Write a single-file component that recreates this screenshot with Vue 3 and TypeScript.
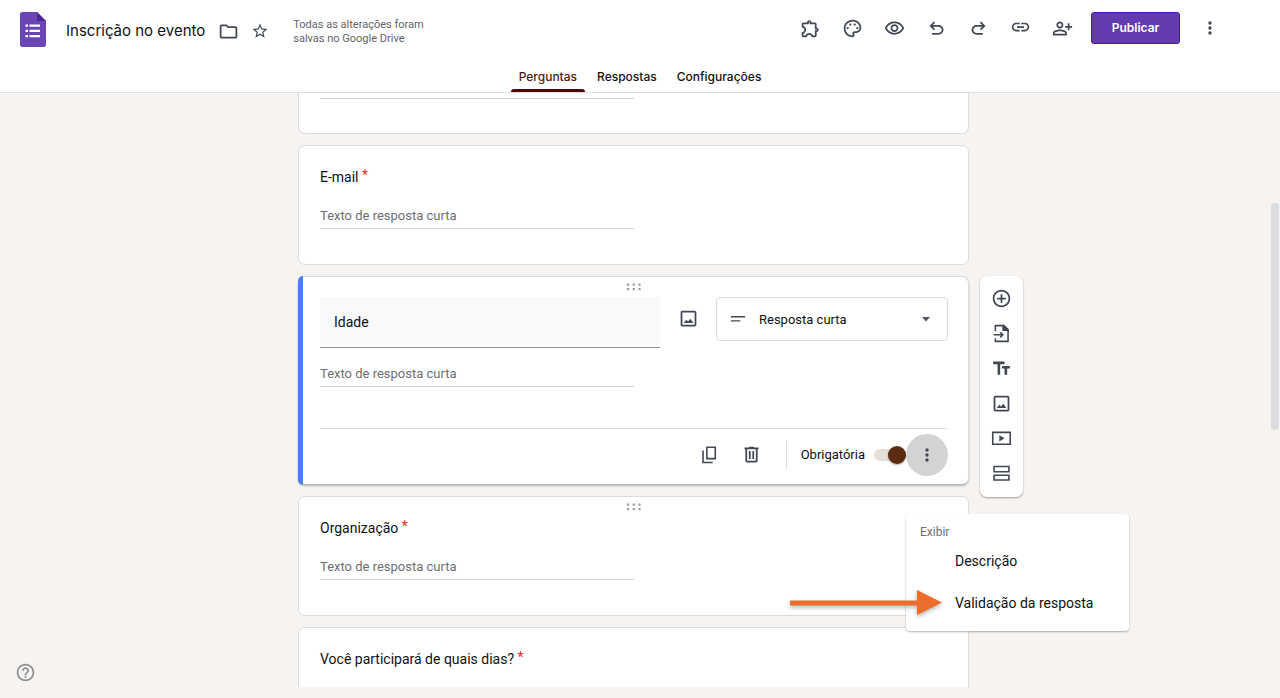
<script setup lang="ts">
import { h, ref } from 'vue'

interface Glyph {
  fill?: string
  line?: string
}

const glyphs: Record<string, Glyph> = {
  folder: {
    fill: 'M9.17 6l2 2H20v10H4V6h5.17M10 4H4c-1.1 0-1.99.9-1.99 2L2 18c0 1.1.9 2 2 2h16c1.1 0 2-.9 2-2V8c0-1.1-.9-2-2-2h-8l-2-2z',
  },
  star: {
    fill: 'M22 9.24l-7.19-.62L12 2 9.19 8.63 2 9.24l5.46 4.73L5.82 21 12 17.27 18.18 21l-1.63-7.03L22 9.24zM12 15.4l-3.76 2.27 1-4.28-3.32-2.88 4.38-.38L12 6.1l1.71 4.04 4.38.38-3.32 2.88 1 4.28L12 15.4z',
  },
  extension: {
    fill: 'M10.5 4.5c.28 0 .5.22.5.5v2h6v6h2c.28 0 .5.22.5.5s-.22.5-.5.5h-2v6h-2.12c-.68-1.75-2.39-3-4.38-3s-3.7 1.25-4.38 3H4v-2.12c1.75-.68 3-2.39 3-4.38 0-1.99-1.24-3.7-2.99-4.38L4 7h6V5c0-.28.22-.5.5-.5m0-2C9.12 2.5 8 3.62 8 5H4c-1.1 0-1.99.9-1.99 2v3.8h.29c1.49 0 2.7 1.21 2.7 2.7s-1.21 2.7-2.7 2.7H2V20c0 1.1.9 2 2 2h3.8v-.3c0-1.49 1.21-2.7 2.7-2.7s2.7 1.21 2.7 2.7v.3H17c1.1 0 2-.9 2-2v-4c1.38 0 2.5-1.12 2.5-2.5S20.38 11 19 11V7c0-1.1-.9-2-2-2h-4c0-1.38-1.12-2.5-2.5-2.5z',
  },
  palette: {
    fill: 'M12 22C6.49 22 2 17.51 2 12S6.49 2 12 2s10 4.04 10 9c0 3.31-2.69 6-6 6h-1.77c-.28 0-.5.22-.5.5 0 .12.05.23.13.33.41.47.64 1.06.64 1.67 0 1.38-1.12 2.5-2.5 2.5zm0-18c-4.41 0-8 3.59-8 8s3.59 8 8 8c.28 0 .5-.22.5-.5 0-.16-.08-.28-.14-.35-.41-.46-.63-1.05-.63-1.65 0-1.38 1.12-2.5 2.5-2.5H16c2.21 0 4-1.79 4-4 0-3.86-3.59-7-8-7zM5.2 11.5a1.3 1.3 0 1 0 2.6 0 1.3 1.3 0 1 0-2.6 0zM8.2 7.5a1.3 1.3 0 1 0 2.6 0 1.3 1.3 0 1 0-2.6 0zM13.2 7.5a1.3 1.3 0 1 0 2.6 0 1.3 1.3 0 1 0-2.6 0zM16.2 11.5a1.3 1.3 0 1 0 2.6 0 1.3 1.3 0 1 0-2.6 0z',
  },
  eye: {
    fill: 'M12 6c3.79 0 7.17 2.13 8.82 5.5C19.17 14.87 15.79 17 12 17s-7.17-2.13-8.82-5.5C4.83 8.13 8.21 6 12 6m0-2C7 4 2.73 7.11 1 11.5 2.73 15.89 7 19 12 19s9.27-3.11 11-7.5C21.27 7.11 17 4 12 4zm0 5c1.38 0 2.5 1.12 2.5 2.5S13.38 14 12 14s-2.5-1.12-2.5-2.5S10.62 9 12 9m0-2c-2.48 0-4.5 2.02-4.5 4.5S9.52 16 12 16s4.5-2.02 4.5-4.5S14.48 7 12 7z',
  },
  undo: {
    fill: 'M7 19v-2h7.1q1.575 0 2.738-1T18 13.5t-1.162-2.5T14.1 10H7.8l2.6 2.6L9 14 4 9l5-5 1.4 1.4L7.8 8h6.3q2.425 0 4.163 1.575T20 13.5t-1.737 3.925T14.1 19z',
  },
  redo: {
    fill: 'M17 19v-2H9.9q-1.575 0-2.738-1T6 13.5t1.162-2.5T9.9 10h6.3l-2.6 2.6L15 14l5-5-5-5-1.4 1.4L16.2 8H9.9Q7.475 8 5.737 9.575T4 13.5t1.737 3.925T9.9 19z',
  },
  link: {
    fill: 'M3.9 10.3c0-1.71 1.39-3.1 3.1-3.1h4V5.3H7c-2.76 0-5 2.24-5 5s2.24 5 5 5h4v-1.9H7c-1.71 0-3.1-1.39-3.1-3.1zM8 11.3h8v-2H8v2zm9-6h-4v1.9h4c1.71 0 3.1 1.39 3.1 3.1s-1.39 3.1-3.1 3.1h-4v1.9h4c2.76 0 5-2.24 5-5s-2.24-5-5-5z',
  },
  share: {
    fill: 'M20 9V6h-2v3h-3v2h3v3h2v-3h3V9h-3zM9 12c2.21 0 4-1.79 4-4s-1.79-4-4-4-4 1.79-4 4 1.79 4 4 4zm0-6c1.1 0 2 .9 2 2s-.9 2-2 2-2-.9-2-2 .9-2 2-2zm6.39 8.56C13.71 13.7 11.53 13 9 13s-4.71.7-6.39 1.56C1.61 15.07 1 16.1 1 17.22V20h16v-2.78c0-1.12-.61-2.15-1.61-2.66zM15 18H3v-.78c0-.38.2-.72.52-.88C4.71 15.73 6.63 15 9 15s4.29.73 5.48 1.34c.32.16.52.5.52.88V18z',
  },
  more: {
    fill: 'M10 6a2 2 0 1 0 4 0 2 2 0 1 0-4 0zM10 12a2 2 0 1 0 4 0 2 2 0 1 0-4 0zM10 18a2 2 0 1 0 4 0 2 2 0 1 0-4 0z',
  },
  image: {
    fill: 'M19 3H5c-1.1 0-2 .9-2 2v14c0 1.1.9 2 2 2h14c1.1 0 2-.9 2-2V5c0-1.1-.9-2-2-2zm0 16H5V5h14v14zM6.6 17l2.9-3.7 2 2.2 2.6-3.3 3.5 4.8z',
  },
  shortText: { line: 'M2.500 9h19M2.500 14.500h12.500' },
  copy: { line: 'M9 3.7h9.6v13H9zM4.6 7.5v13.6h11' },
  trash: {
    fill: 'M15 4V3H9v1H4v2h1v13c0 1.1.9 2 2 2h10c1.1 0 2-.9 2-2V6h1V4h-5zm2 15H7V6h10v13zM9 8h2v9H9zm4 0h2v9h-2z',
  },
  add: {
    fill: 'M13 7h-2v4H7v2h4v4h2v-4h4v-2h-4V7zm-1-5C6.48 2 2 6.48 2 12s4.48 10 10 10 10-4.48 10-10S17.52 2 12 2zm0 18c-4.41 0-8-3.59-8-8s3.59-8 8-8 8 3.59 8 8-3.59 8-8 8z',
  },
  importDoc: {
    fill: 'M13 2h2l5.500 5.500V9H13z',
    line: 'M5 9.500V3h9.500L19.500 8v13H5v-3.500M3 13.500h10.500M10.500 10.500l3 3-3 3',
  },
  title: { fill: 'M2.500 4v3h5v12h3V7h5V4h-13zm19 5h-9v3h3v7h3v-7h3V9z' },
  video: { line: 'M2 5h20v13.500H2z', fill: 'M9.500 8.300v7l6-3.500z' },
  section: { line: 'M3.500 4h17v6h-17zM3.500 14h17v5.500h-17z' },
  help: {
    fill: 'M11 18h2v-2h-2v2zm1-16C6.48 2 2 6.48 2 12s4.480 10 10 10 10-4.480 10-10S17.520 2 12 2zm0 18c-4.410 0-8-3.590-8-8s3.590-8 8-8 8 3.590 8 8-3.590 8-8 8zm0-14c-2.210 0-4 1.790-4 4h2c0-1.100.9-2 2-2s2 .9 2 2c0 2-3 1.750-3 5h2c0-2.250 3-2.500 3-5 0-2.210-1.790-4-4-4z',
  },
}

const Icon = (props: { name: string }) => {
  const glyph = glyphs[props.name]
  return h('svg', { class: 'icon', viewBox: '0 0 24 24', 'aria-hidden': 'true' }, [
    glyph.fill ? h('path', { d: glyph.fill, fill: 'currentColor' }) : null,
    glyph.line
      ? h('path', { d: glyph.line, fill: 'none', stroke: 'currentColor', 'stroke-width': 1.8 })
      : null,
  ])
}
Icon.props = ['name']

const actions = [
  { icon: 'extension', label: 'Complementos' },
  { icon: 'palette', label: 'Personalizar tema' },
  { icon: 'eye', label: 'Visualizar' },
  { icon: 'undo', label: 'Desfazer' },
  { icon: 'redo', label: 'Refazer' },
  { icon: 'link', label: 'Copiar link' },
  { icon: 'share', label: 'Adicionar colaboradores' },
]

const tabs = ['Perguntas', 'Respostas', 'Configurações']
const activeTab = ref('Perguntas')

const tools = [
  { icon: 'add', label: 'Adicionar pergunta' },
  { icon: 'importDoc', label: 'Importar perguntas' },
  { icon: 'title', label: 'Adicionar título e descrição' },
  { icon: 'image', label: 'Adicionar imagem' },
  { icon: 'video', label: 'Adicionar vídeo' },
  { icon: 'section', label: 'Adicionar seção' },
]

const question = ref('Idade')
const required = ref(true)
const answerHint = 'Texto de resposta curta'
</script>

<template>
  <div class="app">
    <header class="header">
      <div class="bar">
        <svg class="logo" viewBox="0 0 26 35" aria-hidden="true">
          <path d="M2.500 0H17l9 9v23.500a2.500 2.500 0 0 1-2.500 2.500h-21A2.500 2.500 0 0 1 0 32.500v-30A2.500 2.500 0 0 1 2.500 0z" fill="#6c45b5" />
          <path d="M17 0l9 9h-9z" fill="#4a2692" />
          <path d="M9.500 12.500H20v2.300H9.500zM9.500 17.800H20v2.300H9.500zM9.500 23H20v2.300H9.500zM5.500 12.500H8v2.300H5.500zM5.500 17.800H8v2.300H5.500zM5.500 23H8v2.300H5.500z" fill="#fff" />
        </svg>
        <h1 class="title">Inscrição no evento</h1>
        <button class="plain" type="button" aria-label="Mover para pasta"><Icon name="folder" /></button>
        <button class="plain star" type="button" aria-label="Marcar com estrela"><Icon name="star" /></button>
        <p class="saved">Todas as alterações foram salvas no Google Drive</p>
        <div class="actions">
          <button v-for="a in actions" :key="a.icon" class="action" type="button" :aria-label="a.label">
            <Icon :name="a.icon" />
          </button>
          <button class="publish" type="button">Publicar</button>
          <button class="action overflow" type="button" aria-label="Mais opções"><Icon name="more" /></button>
        </div>
      </div>
      <nav class="tabs">
        <button
          v-for="t in tabs"
          :key="t"
          class="tab"
          :class="{ current: t === activeTab }"
          type="button"
          @click="activeTab = t"
        >
          {{ t }}
        </button>
      </nav>
    </header>

    <main class="canvas">
      <section class="card continued">
        <div class="rule"></div>
      </section>

      <section class="card">
        <h2 class="question">E-mail <span class="mark">*</span></h2>
        <input class="answer" type="text" disabled :placeholder="answerHint" aria-label="Resposta de E-mail" />
      </section>

      <section class="card active">
        <svg class="grip" viewBox="0 0 14 8" aria-hidden="true">
          <path d="M0 .5h2.200v2.200H0zM5.700.5h2.200v2.200H5.700zM11.400.5h2.200v2.200h-2.200zM0 5h2.200v2.200H0zM5.700 5h2.200v2.200H5.700zM11.400 5h2.200v2.200h-2.200z" fill="#9b9da1" />
        </svg>
        <div class="editor">
          <input v-model="question" class="prompt" type="text" aria-label="Pergunta" />
          <button class="plain picture" type="button" aria-label="Adicionar imagem"><Icon name="image" /></button>
          <div class="kind">
            <Icon name="shortText" />
            <select class="select" aria-label="Tipo de pergunta">
              <option>Resposta curta</option>
            </select>
            <svg class="caret" viewBox="0 0 10 5" aria-hidden="true"><path d="M1 0h8L5 4.500z" fill="#50555e" /></svg>
          </div>
        </div>
        <input class="answer" type="text" disabled :placeholder="answerHint" aria-label="Resposta de Idade" />
        <div class="footer">
          <button class="plain tool" type="button" aria-label="Duplicar"><Icon name="copy" /></button>
          <button class="plain tool" type="button" aria-label="Excluir"><Icon name="trash" /></button>
          <label class="required">
            <span>Obrigatória</span>
            <input v-model="required" class="switch" type="checkbox" role="switch" />
          </label>
          <div class="anchor">
            <button class="more" type="button" aria-label="Mais opções da pergunta"><Icon name="more" /></button>
            <div class="menu">
              <p class="menu-label">Exibir</p>
              <button class="menu-item" type="button">Descrição</button>
              <button class="menu-item" type="button">Validação da resposta</button>
              <svg class="pointer" viewBox="0 0 154 26" aria-hidden="true">
                <path d="M0 10.500h127V0l25 12.500L127 25V15.500H0z" fill="#ec6c2b" />
              </svg>
            </div>
          </div>
        </div>
      </section>

      <aside class="toolbar">
        <button v-for="t in tools" :key="t.icon" class="plain" type="button" :aria-label="t.label">
          <Icon :name="t.icon" />
        </button>
      </aside>

      <section class="card">
        <svg class="grip" viewBox="0 0 14 8" aria-hidden="true">
          <path d="M0 .5h2.200v2.200H0zM5.700.5h2.200v2.200H5.700zM11.400.5h2.200v2.200h-2.200zM0 5h2.200v2.200H0zM5.700 5h2.200v2.200H5.700zM11.400 5h2.200v2.200h-2.200z" fill="#9b9da1" />
        </svg>
        <h2 class="question">Organização <span class="mark">*</span></h2>
        <input class="answer" type="text" disabled :placeholder="answerHint" aria-label="Resposta de Organização" />
      </section>

      <section class="card last">
        <h2 class="question">Você participará de quais dias? <span class="mark">*</span></h2>
      </section>
    </main>

    <div class="scroll-thumb"></div>
    <button class="plain help" type="button" aria-label="Ajuda"><Icon name="help" /></button>
  </div>
</template>

<style>
body {
  margin: 0;
  background: #f6f3f0;
}
</style>

<style scoped>
.app {
  position: relative;
  display: flex;
  flex-direction: column;
  box-sizing: border-box;
  height: 100vh;
  padding-bottom: 11px;
  overflow: hidden;
  background: #f6f3f0;
  color: #111114;
  font-family: Roboto, "Liberation Sans", sans-serif;
}
.app *,
.app *::before {
  box-sizing: border-box;
}
button,
input,
select {
  margin: 0;
  padding: 0;
  border: 0;
  background: none;
  color: inherit;
  font: inherit;
}
h1,
h2,
p {
  margin: 0;
  font-weight: 400;
}
.icon {
  display: block;
  width: 21px;
  height: 21px;
  color: #414753;
}
.plain,
.action {
  display: flex;
  align-items: center;
  justify-content: center;
}
.header {
  flex: none;
  border-bottom: 1px solid #dfe0e2;
  background: #fff;
}
.bar {
  display: flex;
  align-items: flex-start;
  height: 60px;
  padding: 12px 49px 0 20px;
}
.logo {
  width: 26px;
  height: 35px;
  margin-right: 20px;
}
.title {
  margin-right: 13px;
  font: 400 15px/38px Inter, Roboto, sans-serif;
  white-space: nowrap;
}
.bar .plain {
  height: 38px;
}
.star {
  margin-left: 12px;
}
.star .icon {
  width: 18px;
  height: 18px;
}
.saved {
  width: 150px;
  margin: 6px 0 0 24px;
  color: #5f6368;
  font-size: 11px;
  line-height: 14px;
}
.actions {
  display: flex;
  align-items: center;
  height: 32px;
  margin-left: auto;
}
.action {
  width: 42px;
  height: 32px;
}
.publish {
  width: 89px;
  height: 32px;
  margin: 0 9px 0 8px;
  border: 1px solid #4c17a8;
  border-radius: 3px;
  background: #623bb0;
  color: #fff;
  font: 600 12px/30px Inter, Roboto, sans-serif;
}
.tabs {
  display: flex;
  justify-content: center;
  gap: 4px;
}
.tab {
  position: relative;
  height: 32px;
  padding: 2px 8px 0;
  font: 500 12px/30px Inter, Roboto, sans-serif;
}
.tab.current {
  color: #4f1a0b;
}
.tab.current::before {
  content: "";
  position: absolute;
  right: 0;
  bottom: 0;
  left: 0;
  height: 3px;
  border-radius: 3px 3px 0 0;
  background: #4b0a08;
}
.canvas {
  flex: 1;
  display: grid;
  grid-template-columns: minmax(54px, 1fr) minmax(0, 671px) minmax(54px, 1fr);
  grid-auto-rows: max-content;
  row-gap: 11px;
  min-height: 0;
  padding-right: 13px;
  overflow: hidden;
}
.card {
  position: relative;
  grid-column: 2;
  min-height: 119px;
  padding: 20px 20px 35px 21px;
  border: 1px solid #dadce0;
  border-radius: 7px;
  background: #fff;
}
.continued {
  min-height: 0;
  padding-top: 5px;
  padding-bottom: 34px;
  border-top: 0;
  border-radius: 0 0 7px 7px;
}
.rule {
  width: 50%;
  max-width: 314px;
  border-top: 1px solid #cfd1d4;
}
.question {
  font-size: 14px;
  line-height: 22px;
}
.mark {
  color: #d93025;
  line-height: 14px;
  vertical-align: 2px;
}
.answer {
  display: block;
  width: 50%;
  max-width: 314px;
  height: 26px;
  margin-top: 15px;
  border-bottom: 1px solid #cfd1d4;
  font-size: 13px;
}
.answer::placeholder {
  color: #6b7076;
  opacity: 1;
}
.active {
  z-index: 1;
  grid-row: 3;
  padding-top: 20px;
  padding-bottom: 0;
  border-bottom-color: #b9bbbe;
  box-shadow: 0 1px 2px rgba(0, 0, 0, 0.25);
}
.active::before {
  content: "";
  position: absolute;
  top: -1px;
  bottom: -1px;
  left: -1px;
  width: 5px;
  border-radius: 7px 0 0 7px;
  background: #4a80ee;
}
.grip {
  position: absolute;
  top: 6px;
  left: 50%;
  width: 14px;
  height: 8px;
  margin-left: -7px;
}
.editor {
  display: flex;
  align-items: flex-start;
}
.prompt {
  flex: 1;
  min-width: 0;
  height: 51px;
  padding: 0 14px;
  border-bottom: 1px solid #8f9297;
  background: #f8f9fb;
  font-size: 14px;
}
.picture {
  width: 56px;
  height: 42px;
}
.kind {
  display: flex;
  align-items: center;
  width: 232px;
  height: 44px;
  border: 1px solid #dadce0;
  border-radius: 4px;
}
.kind .icon {
  width: 18px;
  height: 18px;
  margin-left: 12px;
}
.kind .select {
  flex: 1;
  min-width: 0;
  height: 100%;
  margin-right: -30px;
  padding: 0 30px 0 12px;
  appearance: none;
  font-size: 13px;
}
.caret {
  width: 10px;
  height: 5px;
  margin-right: 16px;
  pointer-events: none;
}
.active .answer {
  margin-top: 13px;
}
.footer {
  display: flex;
  align-items: center;
  justify-content: flex-end;
  height: 56px;
  margin-top: 41px;
  padding-bottom: 4px;
  border-top: 1px solid #dfe0e3;
}
.tool {
  width: 42px;
  height: 42px;
}
.required {
  display: flex;
  align-items: center;
  gap: 9px;
  height: 28px;
  margin-left: 13px;
  padding-left: 14px;
  border-left: 1px solid #dadce0;
  font-size: 13px;
}
.switch {
  position: relative;
  width: 32px;
  height: 12px;
  border-radius: 6px;
  appearance: none;
  background: #e7deda;
}
.switch::before {
  content: "";
  position: absolute;
  top: -3px;
  left: 0;
  width: 18px;
  height: 18px;
  border-radius: 50%;
  background: #8b8b8b;
  box-shadow: 0 1px 2px rgba(0, 0, 0, 0.35);
}
.switch:checked::before {
  left: 14px;
  background: #5b2c12;
}
.anchor {
  position: relative;
}
.more {
  display: flex;
  align-items: center;
  justify-content: center;
  width: 42px;
  height: 42px;
  border-radius: 50%;
  background: #d3d3d3;
}
.more .icon,
.overflow .icon {
  width: 20px;
  height: 20px;
}
.menu {
  position: absolute;
  top: 80px;
  left: 0;
  width: 223px;
  padding: 11px 0 7px;
  border-radius: 4px;
  background: #fff;
  box-shadow: 0 1px 2px rgba(0, 0, 0, 0.3);
}
.menu-label {
  padding-left: 14px;
  color: #6b7076;
  font-size: 12px;
  line-height: 15px;
}
.menu-item {
  display: block;
  width: 100%;
  height: 42px;
  padding-left: 49px;
  font-size: 14px;
  text-align: left;
}
.pointer {
  position: absolute;
  top: 76px;
  left: -116px;
  width: 154px;
  height: 26px;
  filter: drop-shadow(0 2px 2px rgba(0, 0, 0, 0.3));
}
.toolbar {
  grid-column: 3;
  grid-row: 3 / span 2;
  align-self: start;
  width: 43px;
  margin-left: 11px;
  padding: 5px 0 6px;
  border-radius: 7px;
  background: #fff;
  box-shadow: 0 1px 2px rgba(0, 0, 0, 0.35);
}
.toolbar .plain {
  width: 100%;
  height: 35px;
}
.last {
  min-height: 180px;
}
.scroll-thumb {
  position: absolute;
  top: 203px;
  right: 1px;
  width: 8px;
  height: 227px;
  border-radius: 4px;
  background: #dadce0;
}
.help {
  position: absolute;
  bottom: 15px;
  left: 15px;
}
.help .icon {
  color: #8d9094;
}
</style>
